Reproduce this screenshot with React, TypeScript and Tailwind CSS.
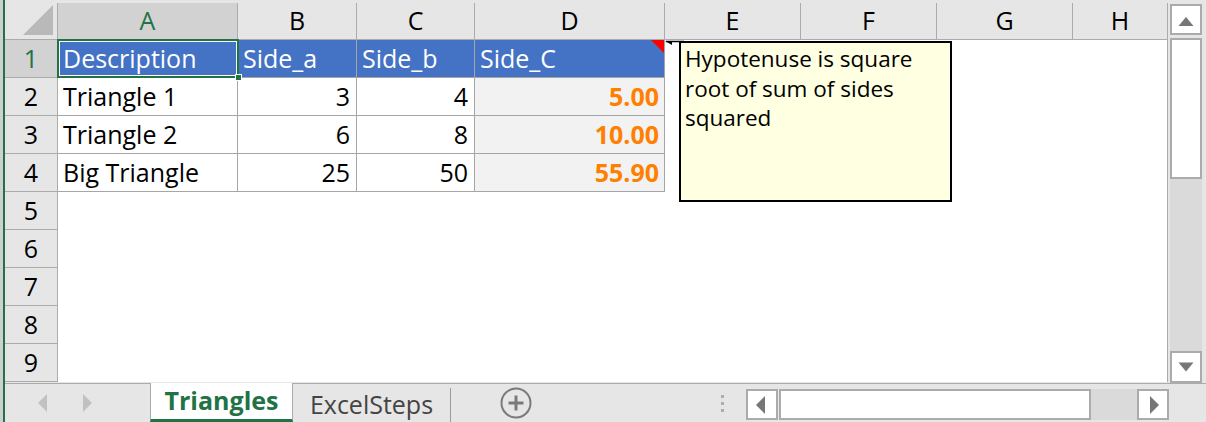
const font = { fontFamily: '"Open Sans", "Liberation Sans", sans-serif' };

const cols = ["A", "B", "C", "D", "E", "F", "G", "H"];

const rows = [
  ["Triangle 1", "3", "4", "5.00"],
  ["Triangle 2", "6", "8", "10.00"],
  ["Big Triangle", "25", "50", "55.90"],
];

function Tri({ dir, color, size = 8 }: { dir: "up" | "down" | "left" | "right"; color: string; size?: number }) {
  const pts = {
    up: "0,10 10,10 5,4",
    down: "0,3 10,3 5,9",
    left: "7,0 7,12 1,6",
    right: "3,0 3,12 9,6",
  }[dir];
  return (
    <svg width={size + 4} height={size + 4} viewBox="0 0 10 12">
      <polygon points={pts} fill={color} />
    </svg>
  );
}

function App() {
  return (
    <div className="w-[1206px] h-[422px] flex bg-[#e6e6e6] overflow-hidden text-black" style={font}>
      {/* left window edge */}
      <div className="w-[3px] bg-[#cfcfcf]" />
      <div className="w-[2px] bg-[#217346]" />

      <div className="flex-1 flex flex-col">
        <div className="flex h-[383px]">
          {/* sheet */}
          <div className="relative w-[1163px] pt-[3px]">
            <div className="grid grid-cols-[53px_180px_119px_118px_190px_136px_136px_136px_95px] grid-rows-[37px_repeat(9,38px)] bg-white border-r border-[#ababab]">
              {/* corner */}
              <div className="bg-[#e6e6e6] border-r border-b border-[#ababab] flex items-end justify-end p-[4px]">
                <svg width="30" height="30" viewBox="0 0 30 30">
                  <polygon points="30,0 30,30 0,30" fill="#b9b9b9" />
                </svg>
              </div>
              {cols.map((c, i) => (
                <div
                  key={c}
                  className={
                    i === 0
                      ? "bg-[#d2d2d2] text-[#217346] border-r border-b border-[#ababab] flex items-center justify-center text-[25px]"
                      : "bg-[#e6e6e6] border-r border-b border-[#ababab] flex items-center justify-center text-[25px]"
                  }
                >
                  {c}
                </div>
              ))}

              {/* row 1 */}
              <div className="bg-[#d2d2d2] text-[#217346] border-r border-b border-[#ababab] flex items-center justify-center text-[25px]">
                1
              </div>
              <div className="relative bg-[#4472c4] text-white text-[25px] flex items-end pl-[5px] border-r border-b border-[#a6a6a6]">
                <div className="absolute -left-px -top-px w-[182px] h-[39px] border-2 border-[#217346] z-10">
                  <div className="w-full h-full border border-white" />
                  <div className="absolute -right-[5px] -bottom-[5px] w-[7px] h-[7px] bg-[#217346] border border-white" />
                </div>
                Description
              </div>
              <div className="bg-[#4472c4] text-white text-[25px] flex items-end pl-[5px] border-r border-b border-[#a6a6a6]">
                Side_a
              </div>
              <div className="bg-[#4472c4] text-white text-[25px] flex items-end pl-[5px] border-r border-b border-[#a6a6a6]">
                Side_b
              </div>
              <div className="relative bg-[#4472c4] text-white text-[25px] flex items-end pl-[5px] border-r border-b border-[#a6a6a6]">
                Side_C
                <svg className="absolute right-0 top-0" width="13" height="13" viewBox="0 0 13 13">
                  <polygon points="0,0 13,0 13,13" fill="#ff0000" />
                </svg>
              </div>
              <div className="col-span-4" />

              {rows.map((r, ri) => (
                <div key={ri} className="contents">
                  <div className="bg-[#e6e6e6] border-r border-b border-[#ababab] flex items-center justify-center text-[25px]">
                    {ri + 2}
                  </div>
                  <div className="text-[25px] flex items-end pl-[5px] border-r border-b border-[#a6a6a6]">{r[0]}</div>
                  <div className="text-[25px] flex items-end justify-end pr-[6px] border-r border-b border-[#a6a6a6]">{r[1]}</div>
                  <div className="text-[25px] flex items-end justify-end pr-[6px] border-r border-b border-[#a6a6a6]">{r[2]}</div>
                  <div className="bg-[#f2f2f2] text-[#ff7f00] font-bold text-[25px] flex items-end justify-end pr-[5px] border-r border-b border-[#a6a6a6]">
                    {r[3]}
                  </div>
                  <div className="col-span-4" />
                </div>
              ))}

              {[5, 6, 7, 8, 9].map((n) => (
                <div key={n} className="contents">
                  <div className="bg-[#e6e6e6] border-r border-b border-[#ababab] flex items-center justify-center text-[25px]">
                    {n}
                  </div>
                  <div className="col-span-8" />
                </div>
              ))}
            </div>

            {/* comment */}
            <svg className="absolute left-[659px] top-[40px]" width="20" height="8" viewBox="0 0 20 8">
              <polygon points="1,1 8,1 8,5" fill="#000" />
              <line x1="2" y1="1.5" x2="20" y2="1.5" stroke="#000" strokeWidth="1.5" />
            </svg>
            <div className="absolute left-[674px] top-[41px] w-[273px] h-[161px] bg-[#ffffe1] border-2 border-black px-[4px] pt-[1px] text-[22.5px] leading-[29.5px]">
              Hypotenuse is square root of sum of sides squared
            </div>
          </div>

          {/* vertical scrollbar */}
          <div className="w-[38px] flex flex-col pl-[2px] pr-[4px] pt-[4px]">
            <div className="h-[31px] bg-white border-2 border-[#ababab] flex items-center justify-center">
              <Tri dir="up" color="#777" size={14} />
            </div>
            <div className="h-[141px] mt-[3px] bg-white border-2 border-[#ababab]" />
            <div className="flex-1 bg-[#dadada]" />
            <div className="h-[32px] bg-white border-2 border-[#ababab] flex items-center justify-center">
              <Tri dir="down" color="#777" size={14} />
            </div>
          </div>
        </div>

        {/* sheet tabs */}
        <div className="h-[39px] flex border-t border-[#ababab] relative">
          <div className="w-[145px] flex items-center pl-[30px] gap-[24px]">
            <Tri dir="left" color="#c1c1c1" size={14} />
            <Tri dir="right" color="#c1c1c1" size={14} />
          </div>
          <div className="w-[143px] -mt-px bg-white border-x border-[#ababab] border-b-[3px] border-b-[#217346] flex items-center justify-center text-[25px] font-bold text-[#217346]">
            Triangles
          </div>
          <div className="w-[158px] flex items-center justify-center text-[25px] text-[#444] border-r border-[#9b9b9b] my-[4px] mb-0">
            ExcelSteps
          </div>
          <div className="w-[130px] flex items-center justify-center">
            <svg width="32" height="32" viewBox="0 0 32 32">
              <circle cx="16" cy="16" r="14.5" fill="none" stroke="#7a7a7a" strokeWidth="2" />
              <line x1="16" y1="8.5" x2="16" y2="23.5" stroke="#7a7a7a" strokeWidth="3" />
              <line x1="8.5" y1="16" x2="23.5" y2="16" stroke="#7a7a7a" strokeWidth="3" />
            </svg>
          </div>
          <div className="w-[165px] flex flex-col items-end justify-center gap-[4px] pr-[22px]">
            <div className="w-[3px] h-[3px] bg-[#adadad]" />
            <div className="w-[3px] h-[3px] bg-[#adadad]" />
            <div className="w-[3px] h-[3px] bg-[#adadad]" />
          </div>
          {/* horizontal scrollbar */}
          <div className="flex pt-[5px] pb-[2px]">
            <div className="w-[32px] bg-white border-2 border-[#ababab] flex items-center justify-center">
              <Tri dir="left" color="#777" size={14} />
            </div>
            <div className="w-[312px] ml-px bg-white border-2 border-[#ababab]" />
            <div className="w-[46px] bg-[#dadada]" />
            <div className="w-[32px] bg-white border-2 border-[#ababab] flex items-center justify-center">
              <Tri dir="right" color="#777" size={14} />
            </div>
          </div>
        </div>
      </div>
    </div>
  );
}

export default App;
